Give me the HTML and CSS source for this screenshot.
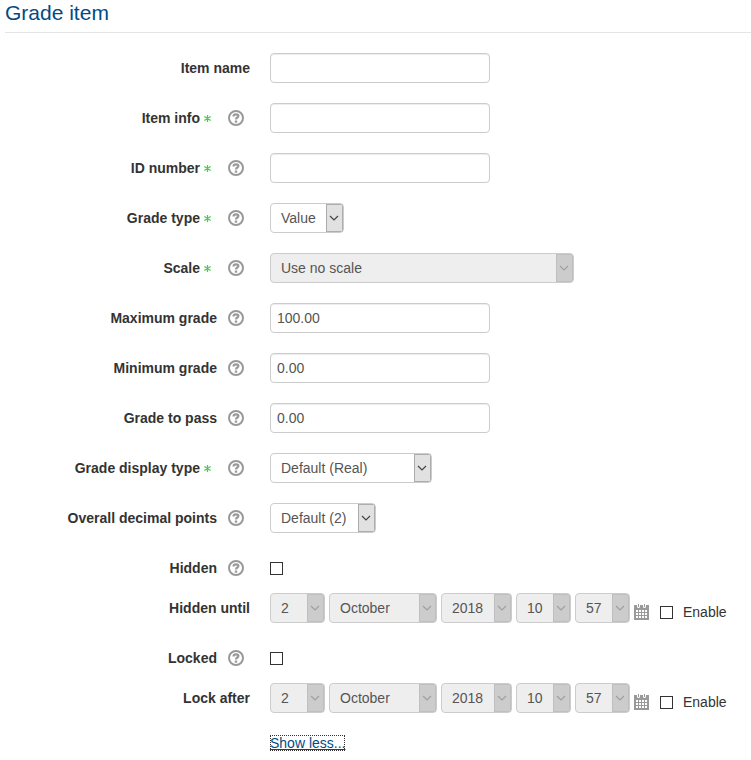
FILE: index.html
```html
<!DOCTYPE html>
<html lang="en">
<head>
    <meta charset="UTF-8">
    <meta name="viewport" content="width=device-width, initial-scale=1.0">
    <title>Grade item</title>
    <link rel="stylesheet" href="styles.css">
</head>
<body>
    <!-- Shared icons -->
    <svg class="sprite" aria-hidden="true">
        <symbol id="icon-help" viewBox="0 0 16 16">
            <circle cx="8" cy="8" r="7" fill="none" stroke="#999" stroke-width="2"/>
            <path d="M5.500 6.500C5.600 4.900 6.600 4.400 8 4.400c1.500 0 2.400.6 2.400 1.700C10.400 7.700 8 7.400 8 9.500" fill="none" stroke="#999" stroke-width="2.200"/>
            <rect x="6.800" y="10.500" width="2.400" height="2.200" fill="#999"/>
        </symbol>
        <symbol id="icon-advanced" viewBox="0 0 7 7">
            <path d="M3.500 0v7M.3 1.500l6.400 4M6.700 1.500l-6.400 4" fill="none" stroke="#55c455" stroke-width="1.300"/>
        </symbol>
        <symbol id="icon-calendar" viewBox="0 0 15 16">
            <path d="M0 1h15v15H0z" fill="#999"/>
            <path d="M2 6h2v2H2zM5 6h2v2H5zM8 6h2v2H8zM11 6h2v2h-2zM2 9h2v2H2zM5 9h2v2H5zM8 9h2v2H8zM11 9h2v2h-2zM2 12h2v2H2zM5 12h2v2H5zM8 12h2v2H8zM11 12h2v2h-2z" fill="#fff"/>
            <path d="M3 0h3v2.500a1.500 1.500 0 0 1-3 0zM9 0h3v2.500a1.500 1.500 0 0 1-3 0z" fill="#fff"/>
            <path d="M4 0h1v3H4zM10 0h1v3h-1z" fill="#999"/>
        </symbol>
    </svg>

    <form class="grade-form">
        <h2 class="legend">Grade item</h2>

        <div class="row">
            <div class="row-label"><label for="itemname">Item name</label></div>
            <div class="row-field"><input type="text" id="itemname"></div>
        </div>
        <div class="row">
            <div class="row-label">
                <label for="iteminfo">Item info</label>
                <svg class="advanced"><use href="#icon-advanced"/></svg>
                <button type="button" class="help" aria-label="Help with Item info"><svg><use href="#icon-help"/></svg></button>
            </div>
            <div class="row-field"><input type="text" id="iteminfo"></div>
        </div>
        <div class="row">
            <div class="row-label">
                <label for="idnumber">ID number</label>
                <svg class="advanced"><use href="#icon-advanced"/></svg>
                <button type="button" class="help" aria-label="Help with ID number"><svg><use href="#icon-help"/></svg></button>
            </div>
            <div class="row-field"><input type="text" id="idnumber"></div>
        </div>
        <div class="row">
            <div class="row-label">
                <label for="gradetype">Grade type</label>
                <svg class="advanced"><use href="#icon-advanced"/></svg>
                <button type="button" class="help" aria-label="Help with Grade type"><svg><use href="#icon-help"/></svg></button>
            </div>
            <div class="row-field"><select id="gradetype" class="select-type"><option>Value</option></select></div>
        </div>
        <div class="row">
            <div class="row-label">
                <label for="scale">Scale</label>
                <svg class="advanced"><use href="#icon-advanced"/></svg>
                <button type="button" class="help" aria-label="Help with Scale"><svg><use href="#icon-help"/></svg></button>
            </div>
            <div class="row-field"><select id="scale" class="select-scale" disabled><option>Use no scale</option></select></div>
        </div>
        <div class="row">
            <div class="row-label">
                <label for="grademax">Maximum grade</label>
                <button type="button" class="help" aria-label="Help with Maximum grade"><svg><use href="#icon-help"/></svg></button>
            </div>
            <div class="row-field"><input type="text" id="grademax" value="100.00"></div>
        </div>
        <div class="row">
            <div class="row-label">
                <label for="grademin">Minimum grade</label>
                <button type="button" class="help" aria-label="Help with Minimum grade"><svg><use href="#icon-help"/></svg></button>
            </div>
            <div class="row-field"><input type="text" id="grademin" value="0.00"></div>
        </div>
        <div class="row">
            <div class="row-label">
                <label for="gradepass">Grade to pass</label>
                <button type="button" class="help" aria-label="Help with Grade to pass"><svg><use href="#icon-help"/></svg></button>
            </div>
            <div class="row-field"><input type="text" id="gradepass" value="0.00"></div>
        </div>
        <div class="row">
            <div class="row-label">
                <label for="display">Grade display type</label>
                <svg class="advanced"><use href="#icon-advanced"/></svg>
                <button type="button" class="help" aria-label="Help with Grade display type"><svg><use href="#icon-help"/></svg></button>
            </div>
            <div class="row-field"><select id="display" class="select-display"><option>Default (Real)</option></select></div>
        </div>
        <div class="row">
            <div class="row-label">
                <label for="decimals">Overall decimal points</label>
                <button type="button" class="help" aria-label="Help with Overall decimal points"><svg><use href="#icon-help"/></svg></button>
            </div>
            <div class="row-field"><select id="decimals" class="select-decimals"><option>Default (2)</option></select></div>
        </div>
        <div class="row row-check">
            <div class="row-label">
                <label for="hidden">Hidden</label>
                <button type="button" class="help" aria-label="Help with Hidden"><svg><use href="#icon-help"/></svg></button>
            </div>
            <div class="row-field"><input type="checkbox" id="hidden"></div>
        </div>
        <div class="row">
            <div class="row-label"><label for="hidden-day">Hidden until</label></div>
            <div class="row-field date">
                <select id="hidden-day" class="select-short" disabled><option>2</option></select>
                <select class="select-month" aria-label="Month" disabled><option>October</option></select>
                <select class="select-year" aria-label="Year" disabled><option>2018</option></select>
                <select class="select-short" aria-label="Hour" disabled><option>10</option></select>
                <select class="select-short" aria-label="Minute" disabled><option>57</option></select>
                <div class="date-extra">
                    <button type="button" class="calendar" aria-label="Calendar"><svg><use href="#icon-calendar"/></svg></button>
                    <label class="enable"><input type="checkbox"> Enable</label>
                </div>
            </div>
        </div>
        <div class="row row-check">
            <div class="row-label">
                <label for="locked">Locked</label>
                <button type="button" class="help" aria-label="Help with Locked"><svg><use href="#icon-help"/></svg></button>
            </div>
            <div class="row-field"><input type="checkbox" id="locked"></div>
        </div>
        <div class="row">
            <div class="row-label"><label for="lock-day">Lock after</label></div>
            <div class="row-field date">
                <select id="lock-day" class="select-short" disabled><option>2</option></select>
                <select class="select-month" aria-label="Month" disabled><option>October</option></select>
                <select class="select-year" aria-label="Year" disabled><option>2018</option></select>
                <select class="select-short" aria-label="Hour" disabled><option>10</option></select>
                <select class="select-short" aria-label="Minute" disabled><option>57</option></select>
                <div class="date-extra">
                    <button type="button" class="calendar" aria-label="Calendar"><svg><use href="#icon-calendar"/></svg></button>
                    <label class="enable"><input type="checkbox"> Enable</label>
                </div>
            </div>
        </div>
        <div class="more">
            <a href="#" class="more-link">Show less...</a>
        </div>
    </form>
</body>
</html>
```
FILE: styles.css
```css
* {
    box-sizing: border-box;
}
body {
    margin: 0;
    font-family: "Liberation Sans", Arial, sans-serif;
    font-size: 14px;
    line-height: 20px;
    color: #333;
    background-color: #fff;
}
.sprite {
    display: none;
}
.grade-form {
    padding-left: 5px;
}
.legend {
    margin: 0 0 20px;
    padding-bottom: 6px;
    border-bottom: 1px solid #e5e5e5;
    font-size: 21px;
    font-weight: normal;
    line-height: 26px;
    color: #004b85;
}

/* Form rows */
.row {
    display: grid;
    grid-template-columns: 245px 1fr;
    column-gap: 20px;
    margin-bottom: 20px;
}
.row-check {
    margin-bottom: 10px;
}
.row-label {
    display: flex;
    justify-content: flex-end;
    align-items: center;
    height: 30px;
    font-weight: bold;
}
.row-field {
    display: flex;
    align-items: center;
    min-height: 30px;
}
.advanced {
    width: 7px;
    height: 7px;
    margin: 0 6px 0 4px;
}
button {
    padding: 0;
    border: none;
    background: none;
    cursor: pointer;
}
button svg {
    display: block;
    width: 100%;
    height: 100%;
}
.help {
    width: 16px;
    height: 16px;
    margin: 0 6px 0 11px;
}

/* Controls */
input[type="text"],
select {
    height: 30px;
    margin: 0;
    border: 1px solid #ccc;
    border-radius: 4px;
    background-color: #fff;
    color: #555;
    font-family: inherit;
    font-size: 14px;
}
input[type="text"] {
    width: 220px;
    padding: 4px 6px;
    box-shadow: inset 0 1px 1px rgba(0,0,0,0.075);
}
select {
    appearance: none;
    padding: 0 17px 0 10px;
    background-image: url("data:image/svg+xml,%3Csvg xmlns='http://www.w3.org/2000/svg' width='17' height='28'%3E%3Crect x='.5' y='.5' width='16' height='27' fill='%23e1e1e1' stroke='%23adadad'/%3E%3Cpath d='M4 12l4 4 4-4' fill='none' stroke='%23444' stroke-width='1.2'/%3E%3C/svg%3E");
    background-repeat: no-repeat;
    background-position: right center;
}
select:disabled {
    background-color: #eee;
    background-image: url("data:image/svg+xml,%3Csvg xmlns='http://www.w3.org/2000/svg' width='17' height='28'%3E%3Crect x='.5' y='.5' width='16' height='27' fill='%23ccc' stroke='%23bfbfbf'/%3E%3Cpath d='M4 12l4 4 4-4' fill='none' stroke='%23a0a0a0' stroke-width='1.2'/%3E%3C/svg%3E");
    opacity: 1;
}
input[type="checkbox"] {
    appearance: none;
    width: 13px;
    height: 13px;
    margin: 0;
    border: 1px solid #333;
    background-color: #fff;
}
input[type="checkbox"]:checked {
    background-color: #333;
}
.select-type {
    width: 74px;
}
.select-scale {
    width: 304px;
}
.select-display {
    width: 162px;
}
.select-decimals {
    width: 106px;
}
.select-short {
    width: 55px;
}
.select-month {
    width: 108px;
}
.select-year {
    width: 71px;
}

/* Date selectors */
.date {
    gap: 4px;
}
.date-extra {
    display: flex;
    align-items: center;
    gap: 11px;
    padding-top: 8px;
}
.calendar {
    width: 15px;
    height: 16px;
}
.enable {
    display: flex;
    align-items: center;
    gap: 10px;
}

.more {
    padding-left: 265px;
}
.more-link {
    color: #004b85;
    outline: 1px dotted #333;
    outline-offset: -1px;
}
```
